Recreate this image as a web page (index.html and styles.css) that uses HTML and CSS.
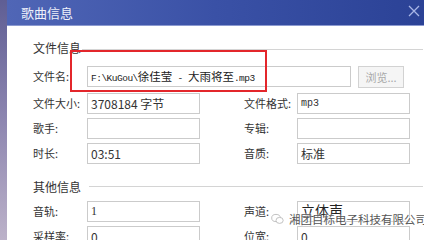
FILE: index.html
```html
<!DOCTYPE html>
<html lang="en">
<head>
    <meta charset="UTF-8">
    <title>歌曲信息</title>
    <link rel="stylesheet" href="styles.css">
</head>
<body>
    <div class="page">
        <div class="edge"></div>
        <div class="dialog">
            <div class="titlebar">
                <span class="title">歌曲信息</span>
                <svg class="close" width="12" height="12" viewBox="0 0 12 12">
                    <path d="M1 1L11 11M11 1L1 11" stroke="#a9b6e6" stroke-width="1.3" fill="none"/>
                </svg>
            </div>
            <div class="body">
                <div class="group-head"><span>文件信息</span><i></i></div>
                <div class="file-row">
                    <span class="label">文件名:</span>
                    <div class="field path">F:\KuGou\<span class="cjk">徐佳莹</span> - <span class="cjk">大雨将至</span>.mp3</div>
                    <button class="browse">浏览...</button>
                </div>
                <div class="grid">
                    <span class="label">文件大小:</span>
                    <div class="field">3708184 字节</div>
                    <span></span>
                    <span class="label">文件格式:</span>
                    <div class="field mono">mp3</div>

                    <span class="label">歌手:</span>
                    <div class="field"></div>
                    <span></span>
                    <span class="label">专辑:</span>
                    <div class="field"></div>

                    <span class="label">时长:</span>
                    <div class="field">03:51</div>
                    <span></span>
                    <span class="label">音质:</span>
                    <div class="field">标准</div>
                </div>

                <div class="group-head second"><span>其他信息</span><i></i></div>
                <div class="grid">
                    <span class="label">音轨:</span>
                    <div class="field serif">1</div>
                    <span></span>
                    <span class="label">声道:</span>
                    <div class="field big">立体声</div>

                    <span class="label">采样率:</span>
                    <div class="field">0</div>
                    <span></span>
                    <span class="label">位宽:</span>
                    <div class="field">0</div>
                </div>

                <div class="highlight"></div>
            </div>
            <div class="watermark">
                <svg width="13" height="12" viewBox="0 0 13 12">
                    <ellipse cx="5" cy="5" rx="4.3" ry="3.6" fill="none" stroke="#bbb" stroke-width="0.9"/>
                    <ellipse cx="8.6" cy="7.4" rx="3.6" ry="3" fill="#fff" stroke="#bbb" stroke-width="0.9"/>
                </svg>
                <span>湘团目标电子科技有限公司</span>
            </div>
        </div>
    </div>
</body>
</html>
```

FILE: styles.css
```css
body {
    margin: 0;
    font-family: "Noto Sans CJK SC", "Noto Sans", sans-serif;
    font-size: 12px;
    color: #333;
    overflow: hidden;
}
.page {
    display: flex;
    width: 424px;
    height: 240px;
}
.edge {
    width: 7px;
    background: linear-gradient(#5f5e94, #8d86b0 50%, #bcb2c9);
}
.dialog {
    flex: 1;
    position: relative;
    background: #fff;
}
.titlebar {
    height: 25px;
    display: flex;
    align-items: center;
    justify-content: space-between;
    padding: 0 4px 0 14px;
    background: linear-gradient(90deg, #5066b6, #3a51a6 50%, #2b4296);
    border-bottom: 1px solid #8c9ad0;
}
.title {
    color: #eef0fa;
    font-size: 13px;
}
.close {
    margin-bottom: 3px;
}
.body {
    position: relative;
    padding: 15px 0 0 26px;
}
.group-head {
    display: flex;
    align-items: center;
    height: 14px;
    line-height: 14px;
    margin-bottom: 11px;
}
.group-head i {
    flex: 1;
    height: 1px;
    background: #d4d4d4;
    margin: 0 1px 0 1px;
    position: relative;
    top: 1px;
}
.group-head.second {
    margin: 16px 0 7px;
}
.group-head.second i {
    margin-left: 8px;
    top: -1px;
}
.label {
    font-size: 11px;
    line-height: 21px;
    white-space: nowrap;
}
.field {
    height: 21px;
    box-sizing: border-box;
    border: 1px solid #cbcbcb;
    padding: 0 3px;
    line-height: 19px;
    background: #fff;
    white-space: nowrap;
    overflow: hidden;
}
.file-row {
    display: grid;
    grid-template-columns: 54px 264px 53px;
    margin-bottom: 5px;
}
.path {
    font-family: "Liberation Mono", monospace;
    font-size: 9.5px;
    letter-spacing: -0.5px;
    color: #222;
}
.path .cjk {
    font-family: "Noto Sans CJK SC", sans-serif;
    font-size: 11.5px;
    letter-spacing: 0;
}
.browse {
    height: 22px;
    margin-left: 7px;
    border: 1px solid #d2d2d2;
    background: #f5f5f5;
    color: #a8a8a8;
    font: 11px "Noto Sans CJK SC", sans-serif;
    padding: 0;
}
.grid {
    display: grid;
    grid-template-columns: 54px 113px 44px 53px 113px;
    grid-auto-rows: 21px;
    row-gap: 4px;
}
.mono {
    font-family: "Liberation Mono", monospace;
    font-size: 10px;
}
.serif {
    font-family: "Liberation Serif", serif;
    font-size: 12px;
}
.big {
    font-size: 14px;
    line-height: 17px;
    color: #222;
    overflow: visible;
}
.highlight {
    position: absolute;
    left: 63px;
    top: 24px;
    width: 193px;
    height: 38px;
    border: 2px solid #e3262b;
}
.watermark {
    position: absolute;
    left: 264px;
    top: 211px;
    display: flex;
    align-items: center;
    gap: 5px;
    font-size: 11.5px;
    color: #555;
    text-shadow: 0 0 2px #fff, 0 0 2px #fff;
    white-space: nowrap;
}
```
